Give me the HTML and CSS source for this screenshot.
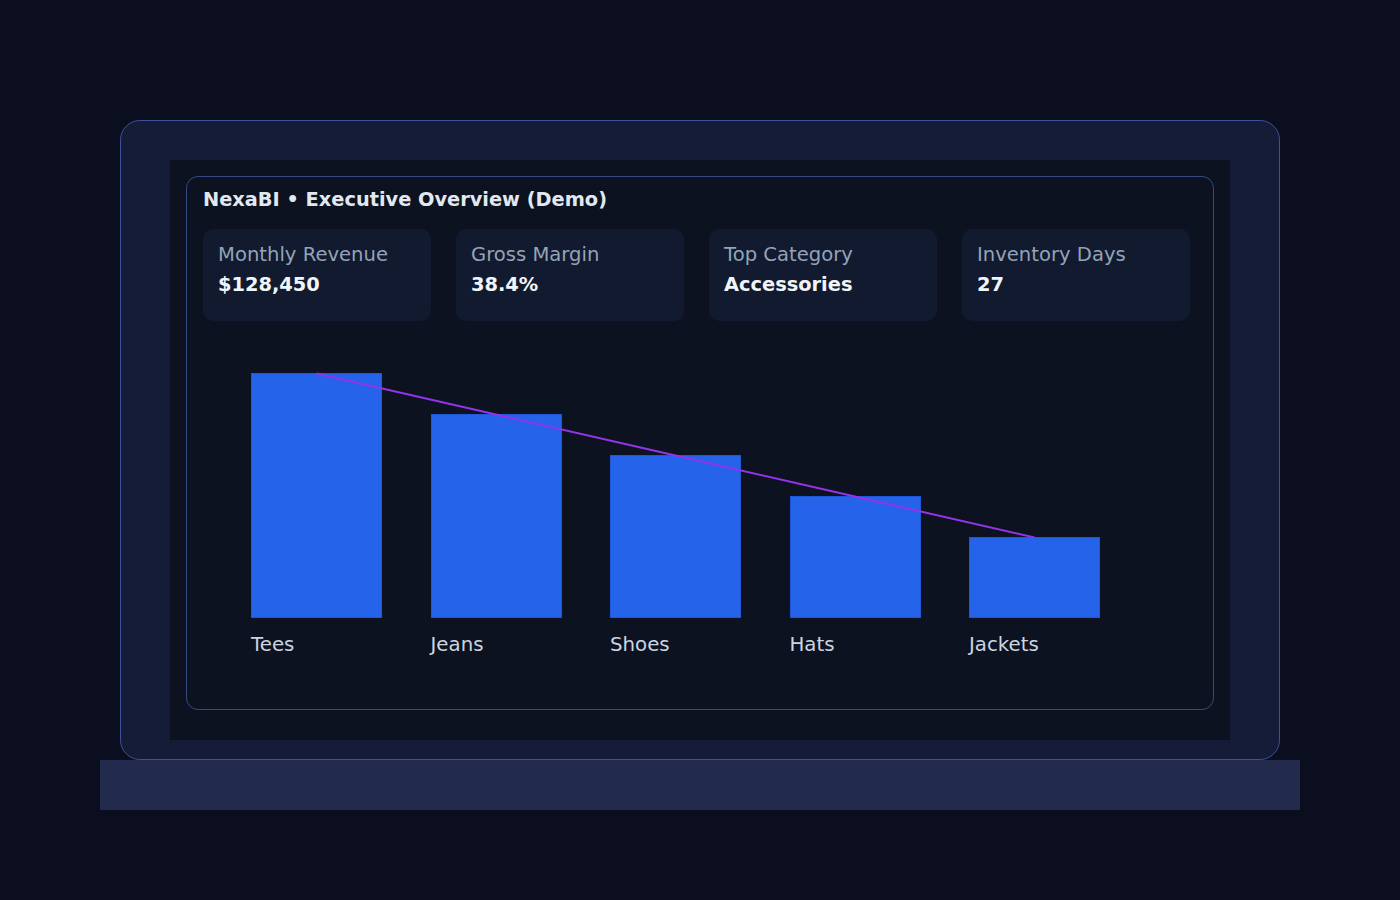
FILE: index.html
```html
<!DOCTYPE html>
<html>
<head>
<meta charset="utf-8">
<title>NexaBI Executive Overview</title>
<link rel="stylesheet" href="styles.css">
</head>
<body>
<div class="stage">
  <div class="laptop">
    <div class="screen">
      <div class="panel">
        <div class="title">NexaBI • Executive Overview (Demo)</div>
        <div class="kpis">
          <div class="kpi"><div class="kpi-label">Monthly Revenue</div><div class="kpi-value">$128,450</div></div>
          <div class="kpi"><div class="kpi-label">Gross Margin</div><div class="kpi-value">38.4%</div></div>
          <div class="kpi"><div class="kpi-label">Top Category</div><div class="kpi-value">Accessories</div></div>
          <div class="kpi"><div class="kpi-label">Inventory Days</div><div class="kpi-value">27</div></div>
        </div>
        <div class="chart">
          <div class="col"><div class="bar" style="height:245px"></div><div class="bar-label">Tees</div></div>
          <div class="col"><div class="bar" style="height:204px"></div><div class="bar-label">Jeans</div></div>
          <div class="col"><div class="bar" style="height:163px"></div><div class="bar-label">Shoes</div></div>
          <div class="col"><div class="bar" style="height:122px"></div><div class="bar-label">Hats</div></div>
          <div class="col"><div class="bar" style="height:81px"></div><div class="bar-label">Jackets</div></div>
          <svg class="trend" width="849" height="245" viewBox="0 0 849 245">
            <polyline points="65.5,0.5 245,41.5 424.5,82.5 604,123.5 783.5,164.5" fill="none" stroke="#9333ea" stroke-width="2"/>
          </svg>
        </div>
      </div>
    </div>
  </div>
  <div class="base"></div>
</div>
</body>
</html>
```

FILE: styles.css
```css
html, body {
  margin: 0;
  padding: 0;
  background: #0a0e1e;
}
body {
  font-family: "DejaVu Sans", Verdana, sans-serif;
  height: 900px;
  overflow: hidden;
}
.stage {
  padding-top: 120px;
}
.laptop {
  box-sizing: border-box;
  width: 1160px;
  height: 640px;
  margin: 0 auto;
  border: 1px solid #3d5294;
  border-radius: 20px;
  background: #151c38;
  padding: 39px 49px 19px;
}
.screen {
  box-sizing: border-box;
  height: 580px;
  background: #0c121f;
  padding: 16px 16px 30px;
}
.panel {
  box-sizing: border-box;
  height: 534px;
  border: 1px solid #354a84;
  border-radius: 12px;
  padding: 12px 16px;
}
.title {
  font-weight: bold;
  font-size: 19.35px;
  line-height: 22px;
  color: #e2e8f0;
}
.kpis {
  display: flex;
  gap: 25px;
  margin-top: 18px;
}
.kpi {
  box-sizing: border-box;
  width: 228px;
  height: 92px;
  background: #111a2e;
  border-radius: 10px;
  padding: 15px 15px;
}
.kpi-label {
  font-size: 19.6px;
  line-height: 22px;
  color: #94a3b8;
}
.kpi-value {
  margin-top: 8px;
  font-size: 19.4px;
  line-height: 22px;
  font-weight: bold;
  color: #f1f5f9;
}
.chart {
  position: relative;
  display: flex;
  align-items: flex-end;
  gap: 48.5px;
  width: 849px;
  height: 283px;
  margin: 52px 0 0 48px;
}
.col {
  display: flex;
  flex-direction: column;
  width: 131px;
}
.bar {
  box-sizing: border-box;
  background: #2563eb;
  border: 1px solid #1f58d6;
}
.bar-label {
  margin-top: 16px;
  font-size: 19.8px;
  line-height: 22px;
  color: #cbd5e1;
}
.trend {
  position: absolute;
  left: 0;
  top: 0;
  overflow: visible;
}
.base {
  width: 1200px;
  height: 50px;
  margin: 0 auto;
  background: #222b4e;
}
```
